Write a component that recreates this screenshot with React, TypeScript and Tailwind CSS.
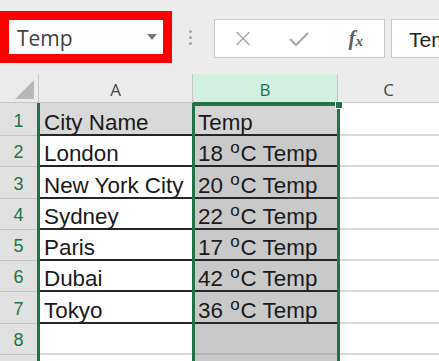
import { Fragment } from "react";

const rows = [
  { n: 1, h: "h-[33px]", a: "City Name", b: null, head: true },
  { n: 2, h: "h-[31px]", a: "London", b: "18" },
  { n: 3, h: "h-[32px]", a: "New York City", b: "20" },
  { n: 4, h: "h-[31px]", a: "Sydney", b: "22" },
  { n: 5, h: "h-[31px]", a: "Paris", b: "17" },
  { n: 6, h: "h-[31px]", a: "Dubai", b: "42" },
  { n: 7, h: "h-[32px]", a: "Tokyo", b: "36" },
];

function Temp({ deg }: { deg: string | null }) {
  if (!deg) return <span className="whitespace-nowrap leading-[15px]">Temp</span>;
  return (
    <span className="whitespace-nowrap leading-[15px]">
      {deg} <span className="text-[17px] align-[8px] mx-[1px]">o</span>C Temp
    </span>
  );
}

export default function App() {
  return (
    <div className="w-[439px] h-[361px] overflow-hidden bg-white text-[#1a1a1a]" style={{ fontFamily: "'Liberation Sans', Arial, sans-serif" }}>
      {/* formula bar */}
      <div className="h-[74px] bg-[#ececec] flex items-start">
        <div className="mt-[11px] w-[172px] h-[52px] shrink-0 border-[9px] border-[#ff0000] bg-white flex items-center justify-between pl-[8px] pr-[6px] pt-[3px]">
          <span className="text-[21px] text-[#404040] font-['Open_Sans',sans-serif]">Temp</span>
          <svg width="10" height="6" viewBox="0 0 10 6" className="-mt-[3px]">
            <path d="M0 0 H10 L5 6 Z" fill="#7a7a7a" />
          </svg>
        </div>
        <div className="ml-[17px] mt-[30px] flex flex-col gap-[3px]">
          <div className="w-[3px] h-[3px] rounded-full bg-[#a6a6a6]" />
          <div className="w-[3px] h-[3px] rounded-full bg-[#a6a6a6]" />
          <div className="w-[3px] h-[3px] rounded-full bg-[#a6a6a6]" />
        </div>
        <div className="ml-[22px] mt-[19px] w-[171px] h-[39px] shrink-0 border border-[#c8c8c8] bg-white grid grid-cols-3 place-items-center">
          <svg width="16" height="15" viewBox="0 0 16 15">
            <path d="M1.5 1 L14.5 14 M14.5 1 L1.5 14" stroke="#a8a8a8" strokeWidth="1.5" />
          </svg>
          <svg width="20" height="14" viewBox="0 0 20 14">
            <path d="M1 7 L7 13 L19 1" stroke="#ababab" strokeWidth="2.2" fill="none" />
          </svg>
          <span className="italic font-bold text-[21px] text-[#5f5f5f] font-['Liberation_Serif',serif] leading-none">
            f<span className="text-[15px] align-[-1px]">x</span>
          </span>
        </div>
        <div className="ml-[6px] mt-[19px] flex-1 h-[39px] border border-r-0 border-[#c8c8c8] bg-white overflow-hidden flex items-center pl-[17px] pt-[2px]">
          <span className="text-[21px] text-[#222] whitespace-nowrap">Temp</span>
        </div>
      </div>

      {/* column headers */}
      <div className="flex h-[29px] bg-[#ececec] text-[17px] font-['Open_Sans',sans-serif]">
        <div className="w-[39px] border-r border-b border-[#c6c6c6] flex items-end justify-end pr-[4px] pb-[3px]">
          <svg width="19" height="19" viewBox="0 0 19 19">
            <path d="M19 0 V19 H0 Z" fill="#b8b8b8" />
          </svg>
        </div>
        <div className="w-[154px] border-r border-b border-[#c6c6c6] flex items-center justify-center pt-[4px] text-[#444]">A</div>
        <div className="w-[144px] bg-[#d3f0e0] border-b border-[#217346] flex items-center justify-center pt-[4px] text-[#217346]">B</div>
        <div className="flex-1 border-l border-b border-[#c6c6c6] flex items-center justify-center pt-[4px] text-[#444]">C</div>
      </div>

      {/* rows */}
      {rows.map((r) => (
        <Fragment key={r.n}>
          <div className={`flex ${r.h} text-[22.4px]`}>
            <div className="w-[40px] border-r-[3px] border-[#217346] bg-[#e1e1e1]">
              <div className="h-full border-b border-[#c4c4c4] flex items-end justify-center pb-[5px] text-[18px] leading-[18px] text-[#217346]">{r.n}</div>
            </div>
            <div className={`w-[152px] border-b-2 border-[#262626] flex items-end pl-[4px] pb-[4px] ${r.head ? "bg-[#d9d9d9]" : "bg-white"}`}>
              <span className="whitespace-nowrap leading-[15px]">{r.a}</span>
            </div>
            <div className={`relative w-[148px] border-x-[3px] border-[#217346] ${r.head ? "border-t-[3px]" : ""}`}>
              <div className={`h-full border-b-2 border-[#262626] flex items-end pl-[3px] pb-[4px] ${r.head ? "bg-[#d5d5d5]" : "bg-[#c9c9c9]"}`}>
                <Temp deg={r.b} />
              </div>
              {r.head && (
                <div className="absolute -top-[5px] -right-[6px] w-[8px] h-[8px] bg-[#217346] border border-white z-10" />
              )}
            </div>
            <div className="flex-1 border-b-2 border-[#dadada] bg-white" />
          </div>
        </Fragment>
      ))}

      {/* empty rows */}
      {["8", ""].map((n, i) => (
        <div key={i} className="flex h-[31px]">
          <div className="w-[40px] border-r-[3px] border-[#217346] bg-[#e1e1e1]">
            <div className="h-full border-b border-[#c4c4c4] flex items-end justify-center pb-[5px] text-[18px] leading-[18px] text-[#217346]">{n}</div>
          </div>
          <div className="w-[152px] border-b-2 border-[#dadada] bg-white" />
          <div className="w-[148px] border-x-[3px] border-[#217346]">
            <div className="h-full border-b-2 border-[#b5b5b5] bg-[#c9c9c9]" />
          </div>
          <div className="flex-1 border-b-2 border-[#dadada] bg-white" />
        </div>
      ))}
    </div>
  );
}
